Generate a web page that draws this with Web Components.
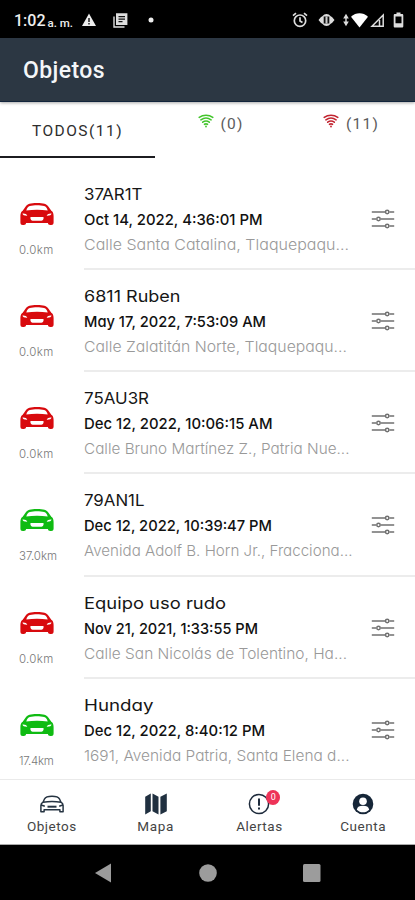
<!DOCTYPE html>
<html lang="es">
<head>
<meta charset="utf-8">
<title>Objetos</title>
<style>
    body {
        margin: 0;
        background: #fff;
        font-family: Roboto, "Liberation Sans", sans-serif;
    }
</style>
</head>
<body>
<tracker-app></tracker-app>

<script>
// Single line of text that fills the given width: tracked by default,
// or with its glyphs widened when it has the "stretch" attribute
class FitText extends HTMLElement {
    connectedCallback() {
        const text = this.getAttribute('text');
        const width = parseFloat(this.getAttribute('width'));
        this.attachShadow({ mode: 'open' });
        this.shadowRoot.innerHTML = `
            <style>
                :host { display: block; white-space: nowrap; width: ${width}px; }
                span { display: inline-block; white-space: pre; vertical-align: top; transform-origin: 0 50%; }
            </style>
            <span></span>
        `;
        const span = this.shadowRoot.querySelector('span');
        span.textContent = text;
        const natural = span.getBoundingClientRect().width;
        if (this.hasAttribute('stretch')) {
            span.style.transform = `scaleX(${width / natural})`;
        } else {
            span.style.letterSpacing = `${(width - natural) / text.length}px`;
        }
    }
}
customElements.define('fit-text', FitText);

const ICONS = {
    car: `<svg width="34" height="24" viewBox="0 0 34 24">
        <path fill="currentColor" fill-rule="evenodd" d="M2.700 8.800 5.500 4.700C7.300 1.800 10.500.9 17 .9s9.700.9 11.500 3.800l2.800 4.100 1 .6c1 1.200 1.300 2.800 1.300 5v6.100c0 1.700-.8 2.500-2.400 2.500h-.9c-1.500 0-2.300-.7-2.400-2H6.100c-.1 1.300-.9 2-2.400 2h-.9c-1.600 0-2.400-.8-2.400-2.500v-6.100c0-2.200.3-3.800 1.300-5zM6.300 8.400c6.900-1 14.500-1 21.400 0-.7-2.300-1.800-3.700-3.600-4.300-3.800-1-10.400-1-14.200 0-1.800.6-2.900 2-3.600 4.300zM2.500 11.600c.3 1.500 1.800 2.300 4.800 2.200-.7-1.600-2.300-2.400-4.800-2.200zm29 0c-2.500-.2-4.100.6-4.800 2.200 3 .1 4.500-.7 4.800-2.200zM11.600 15c-1 0-1.500.4-1.200 1.300l.4 1.300c.3.800.8 1.100 1.700 1.100h9c.9 0 1.400-.3 1.700-1.100l.4-1.300c.3-.9-.2-1.300-1.200-1.300z"/>
    </svg>`,
    sliders: `<svg width="24" height="20" viewBox="0 0 24 20" fill="none" stroke="#707070" stroke-width="1.500">
        <path d="M.8 3H14m4.400 0h4.800M.8 10h4.500m4.400 0h13.500M.8 17H14m4.400 0h4.800"/>
        <circle cx="16.200" cy="3" r="1.700"/><circle cx="7.500" cy="10" r="1.700"/><circle cx="16.200" cy="17" r="1.700"/>
    </svg>`,
    wifi: `<svg width="16" height="14" viewBox="0 0 16 14" fill="none" stroke="currentColor" stroke-width="1.600" stroke-linecap="round">
        <path d="M1.200 3.300c4-2.700 9.600-2.700 13.600 0M2.900 5.800c3-2.100 7.200-2.100 10.200 0M4.700 8.200c2-1.400 4.600-1.400 6.600 0M6.500 10.300c1-.6 2-.6 3 0"/>
        <circle cx="8" cy="12.500" r=".9" fill="currentColor" stroke="none"/>
    </svg>`,
    carOutline: `<svg width="26" height="22" viewBox="0 0 26 22" fill="none" stroke="#263442" stroke-width="1.500" stroke-linejoin="round">
        <path d="M1.900 12.500c0-1.500.6-2.400 2.100-3.300l1.600-3.400C6.600 3.800 9 3.200 13 3.200s6.400.6 7.400 2.600L22 9.200c1.500.9 2.100 1.800 2.100 3.300v6.200h-3.200v-2H5.100v2H1.900zM4 9.200c6-1 12-1 18 0M2.300 12l3.500 1.200m17.900-1.200-3.500 1.200"/>
        <path stroke-width="2" d="M8.500 13.700h9"/>
    </svg>`,
    map: `<svg width="24" height="22" viewBox="0 0 24 22" fill="#203040">
        <path d="M1.200 3.700 6.800.5v17.700l-5.600 3.300zM8.500.5l6 3.200v17.800l-6-3.300zM16.400 3.700 22.800.5v17.700l-6.400 3.300z"/>
    </svg>`,
    alert: `<svg width="22" height="22" viewBox="0 0 22 22" fill="none" stroke="#1d2a3b">
        <circle cx="11" cy="11" r="9.600" stroke-width="1.500"/>
        <path stroke-width="2" d="M11 5.500v7.200M11 14.500v2"/>
    </svg>`,
    user: `<svg width="22" height="22" viewBox="0 0 22 22">
        <circle cx="11" cy="11" r="10.300" fill="#162638"/>
        <circle cx="11" cy="8.200" r="3.800" fill="#fff"/>
        <path fill="#fff" d="M4.800 16.800c.6-3.100 2.700-4 6.200-4s5.600.9 6.200 4c-3.400 3.400-9 3.400-12.400 0z"/>
    </svg>`
};

class StatusBar extends HTMLElement {
    connectedCallback() {
        this.attachShadow({ mode: 'open' });
        this.shadowRoot.innerHTML = `
            <style>
                :host {
                    display: flex;
                    align-items: center;
                    justify-content: space-between;
                    box-sizing: border-box;
                    height: 38px;
                    padding: 2px 11px 0 14px;
                    background: #000;
                    color: #eee;
                }
                .side { display: flex; align-items: center; height: 24px; }
                svg { display: block; }
                .time { font-size: 16px; line-height: 24px; font-weight: 500; margin-top: 2px; }
                .ampm { font-size: 11.500px; line-height: 24px; font-weight: 500; margin: 5px 0 0 2px; }
            </style>
            <div class="side">
                <fit-text class="time" text="1:02" width="31.500"></fit-text>
                <fit-text class="ampm" text="a. m." width="25.500"></fit-text>
                <svg style="margin-left:9px" width="14" height="14" viewBox="0 0 14 14">
                    <path fill="#eee" d="M7 .5 14 13H0z"/><path stroke="#000" stroke-width="1.300" d="M7 5v4m0 1v1.500"/>
                </svg>
                <svg style="margin-left:17px" width="15" height="15" viewBox="0 0 15 15" fill="none" stroke="#ddd" stroke-width="1.400">
                    <path d="M1 3.500V14h10.500"/><path fill="#ddd" d="M3.700 1h10v10.300h-10z"/>
                    <path stroke="#111" stroke-width="1.200" d="M5.500 3.700h6.500M5.500 6.200h6.500M5.500 8.700h4"/>
                </svg>
                <svg style="margin-left:20px" width="6" height="6"><circle cx="3" cy="3" r="2.500" fill="#eee"/></svg>
            </div>
            <div class="side">
                <svg width="16" height="16" viewBox="0 0 16 16" fill="none" stroke="#ddd" stroke-width="1.700">
                    <circle cx="8" cy="8.700" r="5.700"/><path d="M8 5.300v3.700l2.500 1.500M1 3.700l3-2.500m11 2.500-3-2.500"/>
                </svg>
                <svg style="margin-left:10px" width="17" height="14" viewBox="0 0 17 14">
                    <path fill="#ddd" d="M.5 7 3 4l1-.5C5.500 1.800 7 1 8.500 1S11.500 1.800 13 3.500l1 .5 2.500 3-2.500 3-1 .5c-1.500 1.700-3 2.500-4.500 2.500S5.500 12.200 4 10.500L3 10z"/>
                    <rect x="5.700" y="3.500" width="5.600" height="7" fill="#111"/><rect x="7.500" y="3.500" width="2" height="7" fill="#ccc"/>
                </svg>
                <svg style="margin-left:8px" width="6" height="14" viewBox="0 0 6 14" fill="#ddd">
                    <path d="M3 .8 5.800 5.500H.2zM3 13.200.2 8.500h5.600zM2.300 3h1.400v8H2.300z"/>
                </svg>
                <svg style="margin-left:2px" width="17" height="15" viewBox="0 0 17 15"><path fill="#fff" d="M0 3.700C5-.8 12-.8 17 3.700L8.500 14.500z"/></svg>
                <svg style="margin-left:2px" width="15" height="15" viewBox="0 0 15 15" fill="none" stroke="#ddd" stroke-width="1.500">
                    <path d="M2 13.200 13.200 2v11.200z"/><path d="M9.500 7v6"/>
                </svg>
                <svg style="margin-left:8px" width="11" height="16" viewBox="0 0 11 16">
                    <path fill="#ddd" fill-rule="evenodd" d="M3.500.5h4V2H9c.8 0 1.300.5 1.300 1.300v11c0 .8-.5 1.200-1.300 1.200H2c-.8 0-1.300-.4-1.300-1.200v-11C.7 2.500 1.200 2 2 2h1.500zM2.500 4.500v6.700h6V4.500z"/>
                </svg>
            </div>
        `;
    }
}
customElements.define('status-bar', StatusBar);

class AppHeader extends HTMLElement {
    connectedCallback() {
        this.attachShadow({ mode: 'open' });
        this.shadowRoot.innerHTML = `
            <style>
                :host {
                    display: flex;
                    align-items: center;
                    box-sizing: border-box;
                    height: 64px;
                    padding-left: 23px;
                    padding-top: 3px;
                    background: #2c3743;
                    border-bottom: 1px solid #12243c;
                    box-shadow: 0 1px 3px rgba(0, 0, 0, .35);
                    color: #f4f6f8;
                    font-size: 23px;
                    line-height: 30px;
                    font-weight: 500;
                    z-index: 1;
                }
            </style>
            <fit-text text="${this.getAttribute('title')}" width="82"></fit-text>
        `;
    }
}
customElements.define('app-header', AppHeader);

class FilterTabs extends HTMLElement {
    connectedCallback() {
        this.attachShadow({ mode: 'open' });
        this.shadowRoot.innerHTML = `
            <style>
                :host { display: flex; height: 56px; background: #fff; font-size: 15.500px; line-height: 20px; color: #5c5c5c; }
                .tab { display: flex; box-sizing: border-box; justify-content: center; }
                .active {
                    width: 155px;
                    padding-top: 19px;
                    border-bottom: 2px solid #1c1c20;
                    color: #2e2e2e;
                    font-size: 15.500px;
                }
                .online { width: 130px; padding: 12px 0 0 1px; }
                .offline { width: 130px; padding: 12px 0 0 2px; }
                svg { display: block; margin-right: 7px; }
                .online svg { color: #43c52c; }
                .offline svg { color: #c22430; }
            </style>
            <div class="tab active"><fit-text text="TODOS(11)" width="91"></fit-text></div>
            <div class="tab online">${ICONS.wifi}<fit-text text="(0)" width="23"></fit-text></div>
            <div class="tab offline">${ICONS.wifi}<fit-text text="(11)" width="33"></fit-text></div>
        `;
    }
}
customElements.define('filter-tabs', FilterTabs);

class VehicleRow extends HTMLElement {
    set vehicle(v) {
        this.data = v;
    }

    connectedCallback() {
        const v = this.data;
        this.attachShadow({ mode: 'open' });
        this.shadowRoot.innerHTML = `
            <style>
                :host {
                    display: flex;
                    height: 102.300px;
                    font-family: Inter, "Open Sans", sans-serif;
                    font-feature-settings: "cv11";
                }
                svg { display: block; }
                .state { width: 64.500px; padding: 34px 0 0 19.500px; color: ${v.online ? '#0fbb12' : '#d80a0e'}; }
                .km { margin: 15px 0 0 -.500px; font-size: 11.500px; line-height: 18px; font-weight: 300; color: #777; }
                .info {
                    display: flex;
                    flex: 1;
                    box-sizing: border-box;
                    justify-content: space-between;
                    border-bottom: 2px solid #ececec;
                    padding-right: 20px;
                }
                :host(:last-child) .info { border-color: transparent; }
                .text { padding-top: 13px; margin-left: -.500px; }
                .name { font-size: 16.500px; line-height: 26px; color: #161616; }
                .date { font-size: 15px; line-height: 25px; font-weight: 500; color: #111; }
                .address { font-size: 15px; line-height: 25px; font-weight: 300; color: #999; }
                .tune { padding-top: 41px; }
            </style>
            <div class="state">${ICONS.car}<fit-text class="km" text="${v.km[0]}" width="${v.km[1]}"></fit-text></div>
            <div class="info">
                <div class="text">
                    <fit-text stretch class="name" text="${v.name[0]}" width="${v.name[1]}"></fit-text>
                    <fit-text stretch class="date" text="${v.date[0]}" width="${v.date[1]}"></fit-text>
                    <fit-text stretch class="address" text="${v.address[0]}" width="${v.address[1]}"></fit-text>
                </div>
                <div class="tune">${ICONS.sliders}</div>
            </div>
        `;
    }
}
customElements.define('vehicle-row', VehicleRow);

class NavItem extends HTMLElement {
    connectedCallback() {
        const badge = this.getAttribute('badge');
        this.attachShadow({ mode: 'open' });
        this.shadowRoot.innerHTML = `
            <style>
                :host { display: flex; flex: 1; flex-direction: column; align-items: center; padding-top: 12.500px; }
                .icon { position: relative; }
                svg { display: block; }
                .badge {
                    position: absolute;
                    left: 18px;
                    top: -3px;
                    width: 14px;
                    height: 15px;
                    border-radius: 50%;
                    background: #ee3358;
                    color: #fff;
                    font-size: 9px;
                    line-height: 15px;
                    text-align: center;
                }
                .label { margin-top: 1.500px; font-size: 13.500px; line-height: 20px; color: #444; }
            </style>
            <div class="icon">${ICONS[this.getAttribute('icon')]}${badge ? `<span class="badge">${badge}</span>` : ''}</div>
            <fit-text class="label" text="${this.getAttribute('label')}" width="${this.getAttribute('width')}"></fit-text>
        `;
    }
}
customElements.define('nav-item', NavItem);

class BottomNav extends HTMLElement {
    connectedCallback() {
        this.attachShadow({ mode: 'open' });
        this.shadowRoot.innerHTML = `
            <style>
                :host {
                    display: flex;
                    box-sizing: border-box;
                    height: 66px;
                    background: #fff;
                    border-top: 1px solid #eaeaea;
                    border-bottom: 1px solid #aaa;
                }
            </style>
            <slot></slot>
        `;
    }
}
customElements.define('bottom-nav', BottomNav);

class SystemKeys extends HTMLElement {
    connectedCallback() {
        this.attachShadow({ mode: 'open' });
        this.shadowRoot.innerHTML = `
            <style>
                :host { display: flex; height: 55px; align-items: center; justify-content: space-between; background: #000; padding: 0 94px 0 95px; }
                svg { display: block; }
            </style>
            <svg width="17" height="20"><path fill="#9c9c9c" d="M16 .500v19L0 10z"/></svg>
            <svg width="20" height="20"><circle cx="10" cy="10" r="8.800" fill="#9c9c9c"/></svg>
            <svg width="18" height="20"><rect y="1" width="17.500" height="18" rx="1.500" fill="#9c9c9c"/></svg>
        `;
    }
}
customElements.define('system-keys', SystemKeys);

// Each text comes with the width of its line in pixels
const vehicles = [
    { online: false, km: ['0.0km', 34.5], name: ['37AR1T', 58.5], date: ['Oct 14, 2022, 4:36:01 PM', 178.5], address: ['Calle Santa Catalina, Tlaquepaqu...', 265] },
    { online: false, km: ['0.0km', 34.5], name: ['6811 Ruben', 96.5], date: ['May 17, 2022, 7:53:09 AM', 182], address: ['Calle Zalatitán Norte, Tlaquepaqu...', 263] },
    { online: false, km: ['0.0km', 34.5], name: ['75AU3R', 65], date: ['Dec 12, 2022, 10:06:15 AM', 188.5], address: ['Calle Bruno Martínez Z., Patria Nue...', 265.5] },
    { online: true, km: ['37.0km', 38], name: ['79AN1L', 60.5], date: ['Dec 12, 2022, 10:39:47 PM', 188], address: ['Avenida Adolf B. Horn Jr., Fracciona...', 268.5] },
    { online: false, km: ['0.0km', 34.5], name: ['Equipo uso rudo', 142], date: ['Nov 21, 2021, 1:33:55 PM', 174], address: ['Calle San Nicolás de Tolentino, Ha...', 263] },
    { online: true, km: ['17.4km', 34.5], name: ['Hunday', 69.5], date: ['Dec 12, 2022, 8:40:12 PM', 181], address: ['1691, Avenida Patria, Santa Elena d...', 265.5] }
];

class TrackerApp extends HTMLElement {
    connectedCallback() {
        this.attachShadow({ mode: 'open' });
        this.shadowRoot.innerHTML = `
            <style>
                :host { display: flex; flex-direction: column; width: 415px; height: 900px; overflow: hidden; background: #fff; }
                status-bar, app-header, filter-tabs, bottom-nav, system-keys { flex: none; }
                .list { flex: 1; min-height: 0; overflow: hidden; padding-top: 9.600px; }
            </style>
            <status-bar></status-bar>
            <app-header title="Objetos"></app-header>
            <filter-tabs></filter-tabs>
            <div class="list"></div>
            <bottom-nav>
                <nav-item icon="carOutline" label="Objetos" width="50"></nav-item>
                <nav-item icon="map" label="Mapa" width="37"></nav-item>
                <nav-item icon="alert" label="Alertas" width="46.500" badge="0"></nav-item>
                <nav-item icon="user" label="Cuenta" width="46"></nav-item>
            </bottom-nav>
            <system-keys></system-keys>
        `;
        const list = this.shadowRoot.querySelector('.list');
        vehicles.forEach(v => {
            const row = document.createElement('vehicle-row');
            row.vehicle = v;
            list.appendChild(row);
        });
    }
}
customElements.define('tracker-app', TrackerApp);
</script>
</body>
</html>
